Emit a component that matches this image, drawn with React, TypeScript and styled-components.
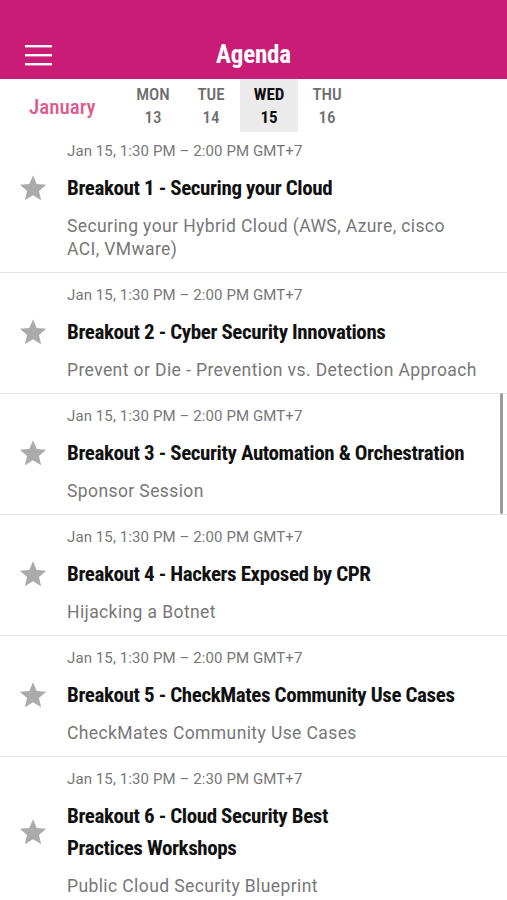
import styled, { createGlobalStyle } from "styled-components";

const GlobalStyle = createGlobalStyle`
  html, body {
    margin: 0;
    padding: 0;
    background: #ffffff;
  }
  body {
    width: 507px;
    height: 900px;
    overflow: hidden;
    font-family: Roboto, "Liberation Sans", sans-serif;
  }
`;

const Page = styled.div`
  position: relative;
  width: 507px;
  height: 900px;
  overflow: hidden;
  display: flex;
  flex-direction: column;
`;

const Header = styled.header`
  flex-shrink: 0;
  height: 79px;
  box-sizing: border-box;
  padding-top: 30px;
  background: #c81c77;
  display: grid;
  grid-template-columns: 76px 1fr 76px;
  align-items: center;
`;

const MenuButton = styled.div`
  padding-left: 25px;
  display: flex;
  align-items: center;
`;

const HeaderTitle = styled.h1`
  margin: 0;
  text-align: center;
  color: #ffffff;
  font-family: Roboto, sans-serif;
  font-stretch: 75%;
  font-weight: 700;
  font-size: 25px;
  letter-spacing: -0.2px;
`;

const DateRow = styled.div`
  flex-shrink: 0;
  height: 53px;
  display: flex;
  align-items: stretch;
`;

const Month = styled.div`
  width: 124px;
  box-sizing: border-box;
  padding-left: 29px;
  padding-top: 3px;
  display: flex;
  align-items: center;
  color: #e0588b;
  font-family: Roboto, sans-serif;
  font-stretch: 75%;
  font-weight: 500;
  font-size: 21px;
`;

const DayCell = styled.div<{ $active?: boolean }>`
  width: 58px;
  display: flex;
  flex-direction: column;
  align-items: center;
  justify-content: center;
  gap: 1px;
  background: ${(p) => (p.$active ? "#ebebeb" : "transparent")};
  color: ${(p) => (p.$active ? "#111111" : "#6e6e6e")};
  font-family: Roboto, sans-serif;
  font-stretch: 75%;
  font-weight: ${(p) => (p.$active ? 700 : 500)};
  font-size: 17px;
  line-height: 22px;
`;

const List = styled.div`
  display: flex;
  flex-direction: column;
`;

const Item = styled.div`
  flex-shrink: 0;
  display: flex;
  flex-direction: column;
  padding: 12px 29px 11px 67px;
  border-bottom: 1px solid #e6e6e6;

  &:first-child {
    padding-top: 9px;
  }
`;

const Time = styled.div`
  font-size: 15px;
  line-height: 20px;
  letter-spacing: 0.1px;
  color: #777777;
  margin-bottom: 11px;
`;

const TitleRow = styled.div`
  position: relative;
`;

const StarWrap = styled.div`
  position: absolute;
  left: -48px;
  top: 50%;
  transform: translateY(-50%);
  width: 28px;
  height: 27px;
`;

const Title = styled.div`
  font-family: Roboto, sans-serif;
  font-stretch: 75%;
  font-weight: 700;
  font-size: 21px;
  line-height: 32px;
  color: #111111;
  letter-spacing: -0.4px;
  white-space: pre-line;
`;

const Subtitle = styled.div`
  margin-top: 11px;
  font-size: 17.5px;
  line-height: 23px;
  letter-spacing: 0.4px;
  color: #777777;
`;

const ScrollThumb = styled.div`
  position: absolute;
  right: 4px;
  top: 393px;
  width: 3px;
  height: 121px;
  border-radius: 2px;
  background: #9a9a9a;
`;

const Hamburger = () => (
  <svg width="27" height="22" viewBox="0 0 27 22">
    <rect x="0" y="1" width="27" height="2.4" fill="#fff" />
    <rect x="0" y="10" width="27" height="2.4" fill="#fff" />
    <rect x="0" y="19" width="27" height="2.4" fill="#fff" />
  </svg>
);

const Star = () => (
  <svg width="28" height="27" viewBox="0 0 24 23">
    <path
      d="M12 0.6l3.2 7.5 8.1 0.7-6.2 5.3 1.9 7.9L12 17.8 5 22l1.9-7.9L0.7 8.8l8.1-0.7z"
      fill="#ababab"
    />
  </svg>
);

const days = [
  { name: "MON", num: 13 },
  { name: "TUE", num: 14 },
  { name: "WED", num: 15, active: true },
  { name: "THU", num: 16 },
];

const sessions = [
  {
    time: "Jan 15, 1:30 PM – 2:00 PM GMT+7",
    title: "Breakout 1 - Securing your Cloud",
    sub: "Securing your Hybrid Cloud (AWS, Azure, cisco ACI, VMware)",
  },
  {
    time: "Jan 15, 1:30 PM – 2:00 PM GMT+7",
    title: "Breakout 2 - Cyber Security Innovations",
    sub: "Prevent or Die - Prevention vs. Detection Approach",
  },
  {
    time: "Jan 15, 1:30 PM – 2:00 PM GMT+7",
    title: "Breakout 3 - Security Automation & Orchestration",
    sub: "Sponsor Session",
  },
  {
    time: "Jan 15, 1:30 PM – 2:00 PM GMT+7",
    title: "Breakout 4 - Hackers Exposed by CPR",
    sub: "Hijacking a Botnet",
  },
  {
    time: "Jan 15, 1:30 PM – 2:00 PM GMT+7",
    title: "Breakout 5 - CheckMates Community Use Cases",
    sub: "CheckMates Community Use Cases",
  },
  {
    time: "Jan 15, 1:30 PM – 2:30 PM GMT+7",
    title: "Breakout 6 - Cloud Security Best\nPractices Workshops",
    sub: "Public Cloud Security Blueprint",
  },
];

const App = () => {
  return (
    <Page>
      <GlobalStyle />
      <Header>
        <MenuButton>
          <Hamburger />
        </MenuButton>
        <HeaderTitle>Agenda</HeaderTitle>
        <div />
      </Header>
      <DateRow>
        <Month>January</Month>
        {days.map((d) => (
          <DayCell key={d.name} $active={d.active}>
            <span>{d.name}</span>
            <span>{d.num}</span>
          </DayCell>
        ))}
      </DateRow>
      <List>
        {sessions.map((s) => (
          <Item key={s.title}>
            <Time>{s.time}</Time>
            <TitleRow>
              <StarWrap>
                <Star />
              </StarWrap>
              <Title>{s.title}</Title>
            </TitleRow>
            <Subtitle>{s.sub}</Subtitle>
          </Item>
        ))}
      </List>
      <ScrollThumb />
    </Page>
  );
};

export default App;
